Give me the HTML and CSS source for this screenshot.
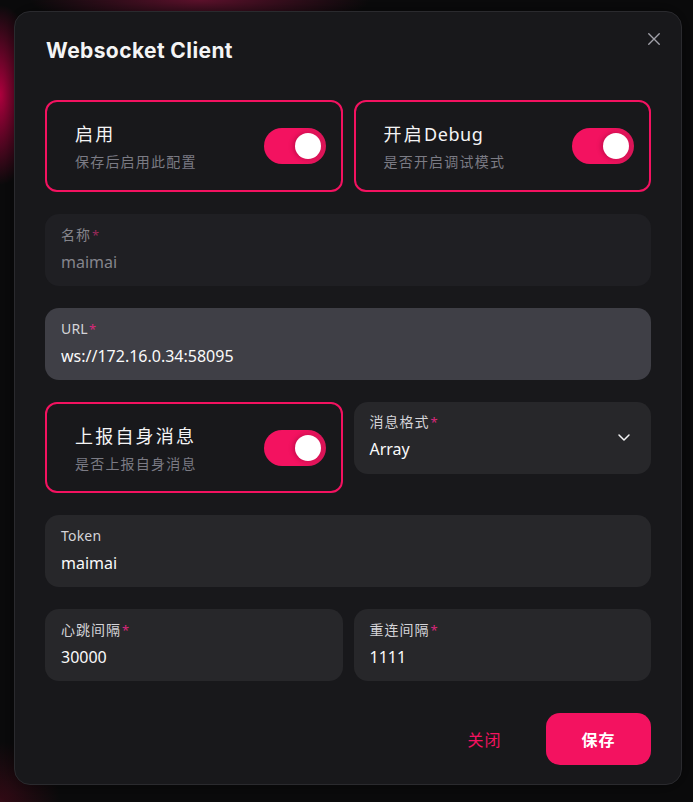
FILE: index.html
```html
<!DOCTYPE html>
<html lang="zh">
<head>
<meta charset="utf-8">
<title>Websocket Client</title>
<link rel="stylesheet" href="styles.css">
</head>
<body>
<div class="dialog">
  <button class="close" aria-label="close">
    <svg width="16" height="16" viewBox="0 0 16 16"><path d="M2 2 L14 14 M14 2 L2 14" stroke="currentColor" stroke-width="1.6" stroke-linecap="round" fill="none"/></svg>
  </button>
  <h2 class="title">Websocket Client</h2>
  <div class="body">
    <div class="row">
      <div class="switch-card">
        <div class="sc-text">
          <div class="sc-label">启用</div>
          <div class="sc-desc">保存后启用此配置</div>
        </div>
        <div class="toggle"><span class="knob"></span></div>
      </div>
      <div class="switch-card">
        <div class="sc-text">
          <div class="sc-label">开启<span class="latin">Debug</span></div>
          <div class="sc-desc">是否开启调试模式</div>
        </div>
        <div class="toggle"><span class="knob"></span></div>
      </div>
    </div>

    <div class="field disabled">
      <div class="f-label">名称<span class="req">*</span></div>
      <div class="f-value">maimai</div>
    </div>

    <div class="field hover">
      <div class="f-label latin-label">URL<span class="req">*</span></div>
      <div class="f-value">ws://172.16.0.34:58095</div>
    </div>

    <div class="row top">
      <div class="switch-card short">
        <div class="sc-text">
          <div class="sc-label">上报自身消息</div>
          <div class="sc-desc">是否上报自身消息</div>
        </div>
        <div class="toggle"><span class="knob"></span></div>
      </div>
      <div class="field select">
        <div class="sel-text">
          <div class="f-label">消息格式<span class="req">*</span></div>
          <div class="f-value">Array</div>
        </div>
        <svg class="chev" width="14" height="14" viewBox="0 0 14 14"><path d="M2 5 L7 10 L12 5" stroke="#f4f4f5" stroke-width="1.5" fill="none" stroke-linecap="round" stroke-linejoin="round"/></svg>
      </div>
    </div>

    <div class="field">
      <div class="f-label latin-label">Token</div>
      <div class="f-value">maimai</div>
    </div>

    <div class="row">
      <div class="field">
        <div class="f-label">心跳间隔<span class="req">*</span></div>
        <div class="f-value">30000</div>
      </div>
      <div class="field">
        <div class="f-label">重连间隔<span class="req">*</span></div>
        <div class="f-value">1111</div>
      </div>
    </div>
  </div>
  <div class="footer">
    <button class="btn btn-light">关闭</button>
    <button class="btn btn-primary">保存</button>
  </div>
</div>
</body>
</html>
```
FILE: styles.css
```css
* { box-sizing: border-box; }
html, body { height: 100%; }
body {
  margin: 0;
  font-family: "Noto Sans", "Noto Sans CJK SC", sans-serif;
  color: #ececee;
  background:
    radial-gradient(ellipse 40px 90px at 0 95px, rgba(200, 0, 70, 0.9), rgba(200, 0, 70, 0) 100%),
    radial-gradient(ellipse 170px 30px at 200px 0, rgba(120, 20, 55, 0.8), rgba(120, 20, 55, 0) 100%),
    radial-gradient(ellipse 60px 60px at 0 802px, rgba(90, 10, 30, 0.5), rgba(90, 10, 30, 0) 100%),
    #0b0b0c;
  padding: 11px 11px 0 14px;
}
.dialog {
  position: relative;
  width: 668px;
  height: 774px;
  background: #18181b;
  border: 1px solid #2a2a2e;
  border-radius: 16px;
  padding: 25px 30px 0 30px;
  box-shadow: 0 0 20px rgba(0,0,0,0.5);
}
.close {
  position: absolute;
  top: 17px;
  right: 17px;
  width: 20px;
  height: 20px;
  padding: 2px;
  border: 0;
  background: transparent;
  color: #a1a1aa;
  display: flex;
  align-items: center;
  justify-content: center;
}
.close svg { width: 14px; height: 14px; }
.title {
  margin: 0;
  font-family: "Inter", "Noto Sans", sans-serif;
  font-size: 21px;
  line-height: 28px;
  font-weight: 700;
  letter-spacing: 0.4px;
  color: #f4f4f5;
  padding-left: 1px;
}
.body {
  margin-top: 35px;
  display: flex;
  flex-direction: column;
  gap: 22px;
}
.row {
  display: grid;
  grid-template-columns: 1fr 1fr;
  gap: 11px;
}
.row.top { align-items: start; }
.switch-card {
  height: 92px;
  border: 2px solid #f31260;
  border-radius: 12px;
  padding: 0 15px 0 28px;
  display: flex;
  align-items: center;
  justify-content: space-between;
}
.switch-card.short { height: 91px; }
.sc-text { display: flex; flex-direction: column; gap: 4px; }
.sc-label { font-size: 18px; line-height: 28px; color: #f4f4f5; letter-spacing: 2.2px; }
.sc-label .latin { letter-spacing: 0.6px; }
.sc-desc { font-size: 14px; line-height: 20px; color: #7b7b84; letter-spacing: 1.2px; }
.toggle {
  width: 62px;
  height: 36px;
  border-radius: 18px;
  background: linear-gradient(90deg, #f31260 55%, #d91557 100%);
  display: flex;
  align-items: center;
  justify-content: flex-end;
  padding-right: 5px;
}
.knob {
  width: 26px;
  height: 26px;
  border-radius: 50%;
  background: #ffffff;
  box-shadow: -2px 0 4px rgba(120, 0, 40, 0.35);
}
.field {
  height: 72px;
  border-radius: 14px;
  background: #27272a;
  padding: 11px 16px 0 16px;
  display: flex;
  flex-direction: column;
  gap: 5px;
}
.field.disabled { background: #1f1f23; }
.field.disabled .f-label { color: #85858c; }
.field.disabled .f-value { color: #85858c; }
.field.disabled .req { color: #9a2a5a; }
.field.hover { background: #3f3f46; }
.f-label { font-size: 14px; line-height: 20px; color: #d4d4d8; letter-spacing: 1px; }
.f-label.latin-label { letter-spacing: 0.2px; }
.req { color: #d9287a; margin-left: 1px; font-size: 13px; }
.f-value { font-size: 16px; line-height: 24px; color: #fafafa; }
.field.select {
  flex-direction: row;
  align-items: center;
  justify-content: space-between;
  padding: 0 20px 0 16px;
}
.sel-text {
  display: flex;
  flex-direction: column;
  gap: 5px;
  align-self: flex-start;
  padding-top: 10px;
}
.chev { margin-top: -2px; }
.footer {
  margin-top: 32px;
  display: flex;
  justify-content: flex-end;
  gap: 9px;
}
.btn {
  width: 105px;
  height: 52px;
  border: 0;
  border-radius: 14px;
  font-family: "Noto Sans CJK SC", sans-serif;
  font-size: 16px;
  letter-spacing: 1px;
  cursor: pointer;
}
.btn-light { background: transparent; color: #f31260; }
.btn-primary { background: #f31260; color: #ffffff; font-weight: 700; }
```
